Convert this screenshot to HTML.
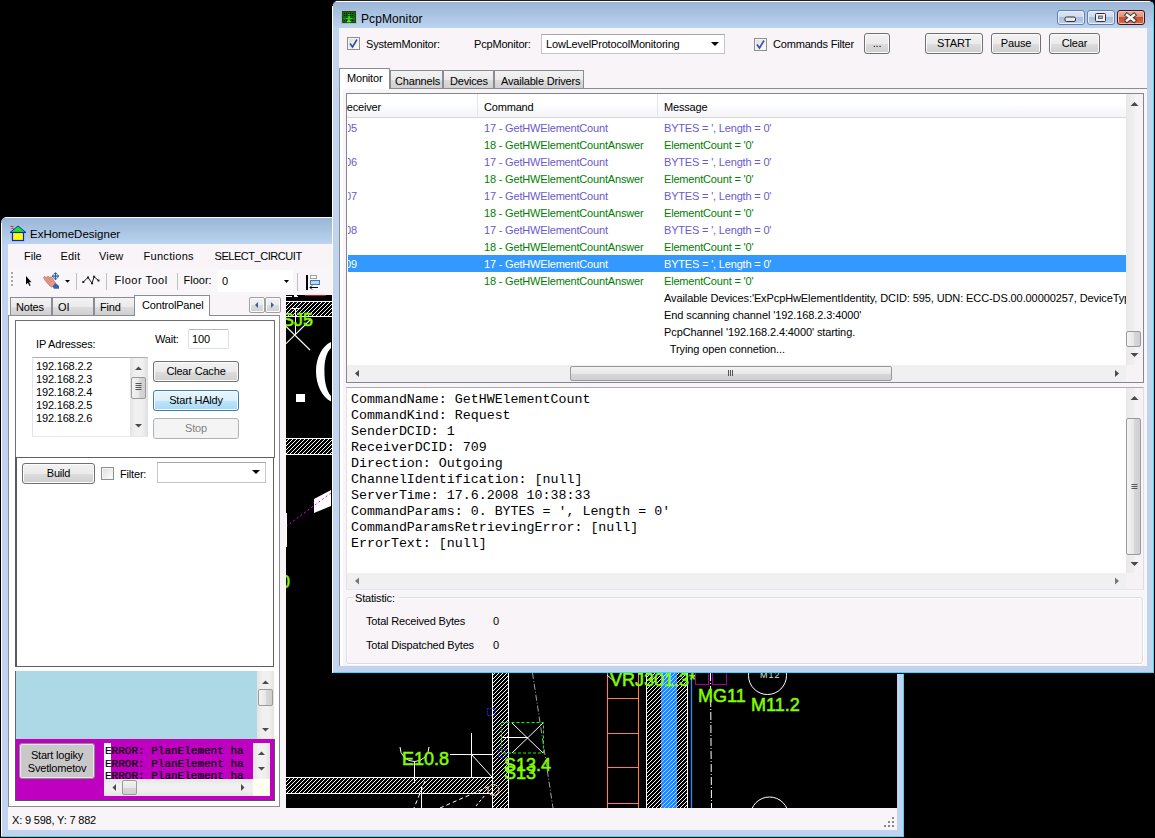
<!DOCTYPE html>
<html><head><meta charset="utf-8">
<style>
*{box-sizing:border-box;margin:0;padding:0}
html,body{width:1155px;height:838px;overflow:hidden;background:#000}
body{position:relative;font-family:"Liberation Sans",sans-serif;font-size:11px;color:#000}
.a{position:absolute}
.t{position:absolute;white-space:pre;font-size:11px;letter-spacing:-0.18px;line-height:13px}
.mono{font-family:"Liberation Mono",monospace}
.btn{position:absolute;border:1px solid #707070;border-radius:3px;background:linear-gradient(#f2f2f2 0%,#ebebeb 50%,#dddddd 51%,#cfcfcf 100%);box-shadow:inset 0 0 0 1px #fcfcfc;text-align:center;font-size:11px;letter-spacing:-0.18px;white-space:pre}
.chk{position:absolute;width:13px;height:13px;border:1px solid #8e8f8f;background:linear-gradient(135deg,#dcdcdc,#fff);box-shadow:inset 0 0 0 1px #f4f4f4}
.frame{position:absolute;background:#c2d5ee}
.client{position:absolute;background:#f8f4f8}
.tab{position:absolute;border:1px solid #898c95;border-bottom:none;background:linear-gradient(#f2f2f2 0%,#ebebeb 50%,#dddddd 51%,#cfcfcf 100%);font-size:11px;letter-spacing:-0.18px;white-space:pre}
.tabsel{position:absolute;border:1px solid #898c95;border-bottom:none;background:#fff;font-size:11px;letter-spacing:-0.18px;white-space:pre}
.sb{position:absolute;background:linear-gradient(90deg,#e3e3e3,#f0f0f0 30%,#f0f0f0 70%,#e3e3e3)}
.sbh{position:absolute;background:linear-gradient(#e3e3e3,#f0f0f0 30%,#f0f0f0 70%,#e3e3e3)}
.thumbv{position:absolute;border:1px solid #9a9a9a;border-radius:2px;background:linear-gradient(90deg,#f3f3f3,#e8e8e8 50%,#d8d8d8 51%,#cfcfcf)}
.thumbh{position:absolute;border:1px solid #9a9a9a;border-radius:2px;background:linear-gradient(#f3f3f3,#e8e8e8 50%,#d8d8d8 51%,#cfcfcf)}
.cad{fill:none;stroke:#fff;stroke-width:1}
.g{fill:#80ff00;stroke:#80ff00;stroke-width:0.5px;font-family:"Liberation Sans",sans-serif;font-size:18px}
</style></head><body>

<!-- ============ ExHomeDesigner window ============ -->
<div class="a" style="left:1px;top:217px;width:903px;height:620px;background:#c0d4ef;border-radius:6px 0 0 0;border-right:1px solid #40d4ff;border-bottom:1px solid #40d4ff"></div>
<div class="a" style="left:1px;top:217px;width:902px;height:27px;border-radius:6px 0 0 0;background:linear-gradient(#fff 0px,#fff 1px,#9ab5d6 1px,#bad3ef 27px)"></div>
<div class="t" style="left:30px;top:228px;font-size:11.5px;letter-spacing:0">ExHomeDesigner</div>
<svg class="a" style="left:9px;top:224px" width="18" height="19"><path d="M1.5 2.5h3M2.5 4.5h2" stroke="#e02020"/><path d="M1 8.5 L9 2 L17 8.5Z" fill="#22e022" stroke="#1020e0" stroke-width="1"/><rect x="3.5" y="8.5" width="11" height="8" fill="#ffff00" stroke="#1020e0" stroke-width="1.2"/></svg>

<!-- client -->
<div class="a" style="left:1px;top:223px;width:1px;height:613px;background:#fff"></div>
<div class="client" style="left:8px;top:244px;width:889px;height:586px"></div>

<!-- menu -->
<div class="t" style="left:24px;top:249.5px;letter-spacing:0px">File</div>
<div class="t" style="left:60.5px;top:249.5px;letter-spacing:0.2px">Edit</div>
<div class="t" style="left:99px;top:249.5px;letter-spacing:0.2px">View</div>
<div class="t" style="left:143.5px;top:249.5px;letter-spacing:0.3px">Functions</div>
<div class="t" style="left:214.5px;top:249.5px;letter-spacing:-0.45px">SELECT_CIRCUIT</div>

<!-- toolbar -->
<div class="a" style="left:8px;top:268px;width:324px;height:27px;background:#f8f6f9"></div>
<div class="t" style="left:114.5px;top:274px;letter-spacing:0.5px">Floor Tool</div>

<div class="t" style="left:183.5px;top:274px;letter-spacing:0px">Floor:</div>
<div class="a" style="left:218px;top:270px;width:75px;height:22px;background:#fff"></div>
<div class="t" style="left:222px;top:275px">0</div>
<svg class="a" style="left:8px;top:268px" width="324" height="27">
<path d="M3 4h2v2h-2zM3 8h2v2h-2zM3 12h2v2h-2zM3 16h2v2h-2z" fill="#a8a8a8"/>
<path d="M18 8 L18 16.5 L19.8 14.8 L21.5 18 L22.6 17.4 L21 14.2 L23.5 14.2Z" fill="#000"/>
<path d="M36 10.5 C35 9,36.5 8,37.5 9 L39 10.5 C38.5 8.5,40 7.5,41 9 L42 10.2 C42 8.5,43.5 8.3,44 9.5 L46 13 L47.5 15 L46 18 L43.5 19 C41 17.5,38 14,36 10.5Z" fill="#e49a88" stroke="#b86c5c" stroke-width="0.7"/>
<path d="M38 11.5 L42 15M40 10.5 L44 14" stroke="#c07868" stroke-width="0.6"/>
<path d="M44.5 18.5 L47.5 15 L51 18 L51 20.8 L46 20.8Z" fill="#3a64a8"/>
<path d="M47.5 5v6.5M44.2 8.2h6.8" stroke="#2a5aa8" stroke-width="1.2"/><path d="M46 6.2 L47.5 4.6 L49 6.2M46 10.2 L47.5 11.8 L49 10.2M45.8 6.7 L44.2 8.2 L45.8 9.7M49.2 6.7 L50.8 8.2 L49.2 9.7" fill="none" stroke="#2a5aa8" stroke-width="1"/>
<path d="M57 12h5 L59.5 14.8Z" fill="#000"/>
<path d="M68.5 5v17" stroke="#c0c0c0"/>
<path d="M75.3 13.9 L80 9.5 L84 15.2 L86.1 8.7 L90.5 12.6" fill="none" stroke="#202020" stroke-width="1"/>
<path d="M74.3 12.9h2v2h-2zM79 8.5h2v2h-2zM83 14.2h2v2h-2zM85.1 7.7h2v2h-2zM89.5 11.6h2v2h-2z" fill="#202020"/>
<path d="M98.5 5v17" stroke="#c0c0c0"/>
<path d="M169.5 5v17" stroke="#c0c0c0"/>
<path d="M276 12h5 L278.5 15Z" fill="#000"/>
<path d="M289.5 5v18" stroke="#c0c0c0"/>
<path d="M299 7v15" stroke="#000" stroke-width="2"/>
<rect x="302.5" y="7.5" width="6" height="3" fill="#fff" stroke="#a0a0a0"/>
<rect x="302.5" y="12.5" width="9" height="4" fill="#c0d8f0" stroke="#3a78c0"/>
<path d="M302 19.5h8M302 19.5 L304 17.5M302 19.5 L304 21.5" fill="none" stroke="#000"/>
</svg>

<!-- left panel -->
<div class="tab" style="left:10px;top:297px;width:42px;height:18px;padding:3px 0 0 5px">Notes</div>
<div class="tab" style="left:52px;top:297px;width:42px;height:18px;padding:3px 0 0 5px">OI</div>
<div class="tab" style="left:94px;top:297px;width:41px;height:18px;padding:3px 0 0 5px">Find</div>
<div class="a" style="left:8px;top:315px;width:272px;height:492px;background:#fff;border:1px solid #898c95"></div>
<div class="tabsel" style="left:134px;top:295px;width:76px;height:21px;padding:3px 0 0 7px">ControlPanel</div>
<!-- tab scroll arrows -->
<div class="btn" style="left:249px;top:297px;width:16px;height:16px;border-color:#a0a0a0;border-radius:2px"></div>
<div class="btn" style="left:265px;top:297px;width:16px;height:16px;border-color:#a0a0a0;border-radius:2px"></div>
<svg class="a" style="left:249px;top:297px" width="32" height="16"><path d="M9 5 L6 8 L9 11Z" fill="#3a5f9a"/><path d="M22 5 L25 8 L22 11Z" fill="#3a5f9a"/></svg>

<!-- group 1 -->
<div class="a" style="left:15px;top:320px;width:260px;height:138px;border:1px solid #6f6f6f"></div>
<div class="t" style="left:36px;top:338px">IP Adresses:</div>
<div class="t" style="left:155px;top:333px">Wait:</div>
<div class="a" style="left:188px;top:329px;width:41px;height:20px;border:1px solid #dcdfe4;border-top-color:#b5b8be;border-radius:2px;background:#fff"></div>
<div class="t" style="left:192px;top:333px">100</div>
<!-- listbox -->
<div class="a" style="left:32px;top:357px;width:116px;height:80px;border:1px solid #9f9f9f;border-color:#abadb3 #dbdfe6 #e3e9ef #e2e3ea;background:#fff"></div>
<div class="t" style="left:36px;top:360px;line-height:13px">192.168.2.2
192.168.2.3
192.168.2.4
192.168.2.5
192.168.2.6</div>
<div class="sb" style="left:130px;top:358px;width:17px;height:78px"></div>
<div class="thumbv" style="left:131px;top:377px;width:15px;height:22px"></div>
<svg class="a" style="left:130px;top:358px" width="17" height="78"><path d="M5 12 L8.5 8.5 L12 12Z" fill="#4a4a4a"/><path d="M5 66 L8.5 69.5 L12 66Z" fill="#4a4a4a"/><path d="M5.5 25.5h6M5.5 27.5h6M5.5 29.5h6M5.5 31.5h6" stroke="#555" stroke-width="1"/></svg>
<div class="btn" style="left:153px;top:361px;width:86px;height:21px;line-height:19px">Clear Cache</div>
<div class="btn" style="left:153px;top:390px;width:86px;height:21px;line-height:19px;border-color:#3c7fb1;background:linear-gradient(#eaf6fd 0%,#d9f0fc 50%,#bee6fd 51%,#a7d9f5 100%)">Start HAldy</div>
<div class="btn" style="left:153px;top:418px;width:86px;height:21px;line-height:19px;border-color:#adb2b5;background:#f4f4f4;color:#838383;box-shadow:none">Stop</div>

<!-- group 2 -->
<div class="a" style="left:15px;top:457px;width:259px;height:210px;border:1px solid #5f5f5f;border-left:2px solid #5a5a5a"></div>
<div class="btn" style="left:22px;top:463px;width:73px;height:21px;line-height:19px">Build</div>
<div class="chk" style="left:101px;top:467px"></div>
<div class="t" style="left:120px;top:468px">Filter:</div>
<div class="a" style="left:157px;top:462px;width:109px;height:21px;border:1px solid #c5c5c5;border-top-color:#a6a6a6;background:#fff"></div>
<svg class="a" style="left:250px;top:468px" width="12" height="8"><path d="M2 2 L10 2 L6 6Z" fill="#000"/></svg>

<!-- light blue area -->
<div class="a" style="left:15px;top:671px;width:242px;height:68px;background:#add8e6;border-left:1px solid #666"></div>
<div class="sb" style="left:257px;top:671px;width:17px;height:68px"></div>
<div class="thumbv" style="left:258px;top:689px;width:15px;height:17px"></div>
<svg class="a" style="left:257px;top:671px" width="17" height="68"><path d="M5 13 L8.5 9.5 L12 13Z" fill="#4a4a4a"/><path d="M5 57 L8.5 60.5 L12 57Z" fill="#4a4a4a"/></svg>

<!-- magenta area -->
<div class="a" style="left:15px;top:739px;width:260px;height:62px;background:#c000c0;border:1px solid #555;border-top:none"></div>
<div class="btn" style="left:19px;top:743px;width:76px;height:36px;line-height:13px;padding-top:5px;background:#c8c8c8;border-color:#8a8a8a;box-shadow:inset 0 0 0 1px #e8e8e8">Start logiky
Svetlometov</div>
<div class="a" style="left:104px;top:743px;width:149px;height:36px;background:#c000c0;overflow:hidden">
<div class="a" style="left:0;top:0;width:7px;height:36px;background:#fff"></div>
<div class="t mono" style="left:1px;top:2px;font-size:11px;line-height:12.5px;letter-spacing:0;-webkit-text-stroke:0.2px #000;color:#000">ERROR: PlanElement ha
ERROR: PlanElement ha
ERROR: PlanElement ha</div>
</div>
<div class="sb" style="left:253px;top:743px;width:17px;height:36px"></div>
<svg class="a" style="left:253px;top:743px" width="17" height="36"><path d="M5 12 L8.5 8.5 L12 12Z" fill="#4a4a4a"/><path d="M5 24 L8.5 27.5 L12 24Z" fill="#4a4a4a"/></svg>
<div class="sbh" style="left:104px;top:779px;width:149px;height:17px"></div>
<div class="thumbh" style="left:122px;top:780px;width:15px;height:15px"></div>
<svg class="a" style="left:104px;top:779px" width="149" height="17"><path d="M12 5 L8.5 8.5 L12 12Z" fill="#4a4a4a"/><path d="M137 5 L140.5 8.5 L137 12Z" fill="#4a4a4a"/></svg>
<div class="a" style="left:253px;top:779px;width:17px;height:17px;background:#fffff0"></div>

<!-- CAD -->
<svg class="a" style="left:286px;top:295px" width="611" height="513" viewBox="286 295 611 513">
<defs>
<pattern id="h1" patternUnits="userSpaceOnUse" width="4" height="4"><path d="M-1 1 L1 -1 M0 4 L4 0 M3 5 L5 3" stroke="#fff" stroke-width="1"/></pattern>
<pattern id="h2" patternUnits="userSpaceOnUse" width="4" height="4"><path d="M-1 1 L1 -1 M0 4 L4 0 M3 5 L5 3" stroke="#b0d8ff" stroke-width="1"/></pattern>
</defs>
<rect x="286" y="295" width="611" height="513" fill="#000"/>
<!-- top strip -->
<path d="M305 295.5h21" stroke="#ff0000" stroke-width="1"/>
<path d="M286 296.5h6M294 296.5h4M294 295.5h3" stroke="#fff"/>
<rect x="286" y="302" width="46" height="14" fill="url(#h1)"/>
<path d="M286 301.5h46M286 316.5h46" stroke="#fff"/>
<path d="M290.5 308.5h10M295.5 308.5v26" stroke="#fff"/>
<path d="M286 326.5 L310 350M286 343.7 L310 320" stroke="#fff" stroke-width="1.1"/>
<text x="282" y="326" class="g">SJ5</text>
<path d="M331 342 C322 346,316 358,316 371 C316 385,322 397,331 401.6 L331 396 C326.5 391,324.4 382,324.4 371 C324.4 360,326.5 352,331 348Z" fill="#fff"/>
<rect x="296" y="394" width="9" height="8" fill="#fff"/>
<rect x="286" y="439" width="46" height="15" fill="url(#h1)"/>
<path d="M286 438.5h46M286 454.5h46" stroke="#fff"/>
<path d="M314 499 L331 490 L331 506 L314 513Z" fill="#fff"/>
<path d="M286 526.5 L331 493" stroke="#ff00ff" stroke-dasharray="2 2.5" stroke-width="1"/>
<rect x="286" y="513" width="1" height="34" fill="#fff"/>
<text x="280" y="587.5" class="g">0</text>

<!-- bottom region -->
<rect x="286" y="778" width="206" height="15" fill="url(#h1)"/>
<path d="M286 777.5h206M286 793.5h206" stroke="#fff"/>
<path d="M400 747 A14.5 14.5 0 0 0 429 747" fill="none" stroke="#fff"/>
<path d="M414.5 761v22M450 754.5h42M471.5 733v44M472 755 L492 777M421.5 786v22" stroke="#fff"/>
<path d="M425 781 L414 808M440 808 L490 786" stroke="#fff" stroke-dasharray="4 3"/>
<text x="402" y="764.5" class="g">E10.8</text>
<!-- vertical wall -->
<rect x="493" y="673" width="15" height="135" fill="url(#h1)"/>
<path d="M492.5 673v135M508.5 673v135" stroke="#fff"/>
<rect x="487.5" y="708.5" width="7.5" height="7" fill="none" stroke="#2020ff" stroke-dasharray="1.5 1"/>
<rect x="498.5" y="749.5" width="7.5" height="8" fill="none" stroke="#2020ff" stroke-dasharray="1.5 1"/>
<circle cx="493.5" cy="790" r="5.5" fill="none" stroke="#f0c080"/>
<path d="M532.5 673 L553 808" stroke="#a0a0a0" stroke-dasharray="6 2 1 2"/>
<path d="M512 723 L543 753M543 723 L512 753M502 737.5h26" stroke="#fff"/>
<rect x="501.5" y="722.5" width="42" height="30.5" fill="none" stroke="#00ff00" stroke-dasharray="3 2"/>
<text x="504" y="771" class="g">S13.4</text>
<text x="504" y="778.5" class="g">S13</text>
<!-- ladder -->
<path d="M607.5 673v135M638.5 673v135M607 698.5h32M607 733.5h32M607 767.5h32M607 803.5h32" stroke="#ff8040" stroke-width="1.1"/>
<rect x="647" y="673" width="41" height="135" fill="url(#h1)"/>
<rect x="661" y="673" width="16" height="135" fill="#1a88ff"/>
<rect x="661" y="673" width="16" height="135" fill="url(#h2)"/>
<path d="M646.5 673v135M687.5 673v135" stroke="#fff"/>
<path d="M691.5 673v135" stroke="#1e90ff" stroke-width="1.3"/>
<path d="M607 675 L615 682" stroke="#fff"/>
<text x="610" y="686" class="g">VRJ301.3*</text>
<rect x="695.5" y="672" width="13" height="12.5" fill="none" stroke="#a000a0"/>
<rect x="712.5" y="672" width="14" height="12.5" fill="none" stroke="#a000a0"/>
<path d="M710.5 673 L711.5 808" stroke="#fff" stroke-dasharray="8 2 1 2"/>
<text x="698" y="702" class="g">MG11</text>
<text x="751" y="711" class="g">M11.2</text>
<circle cx="767.5" cy="675.5" r="19" fill="none" stroke="#fff"/>
<text x="760" y="677.5" fill="#fff" style="font-family:'Liberation Sans';font-size:9px;letter-spacing:1px" opacity="0.85">M12</text>
<path d="M476 806 L485 795" stroke="#fff" stroke-dasharray="3 2"/>
<circle cx="769.5" cy="816" r="19" fill="none" stroke="#fff"/>
</svg>

<!-- status bar -->
<div class="t" style="left:12px;top:814px">X: 9 598, Y: 7 882</div>
<svg class="a" style="left:880px;top:812px" width="17" height="18"><path d="M12 5h2v2h-2zM8 9h2v2h-2zM12 9h2v2h-2zM4 13h2v2h-2zM8 13h2v2h-2zM12 13h2v2h-2z" fill="#8a8a8a"/></svg>

<!-- ============ PcpMonitor window ============ -->
<div class="a" style="left:332px;top:0px;width:822px;height:673px;background:#c0d4ef;border-radius:6px 6px 0 0;border:1px solid #1e1e1e;border-top-color:#1e1e1e;border-right:1px solid #40d4ff;border-bottom:1px solid #40d4ff"></div>
<div class="a" style="left:897px;top:673px;width:8px;height:1px;background:#000"></div>
<div class="a" style="left:333px;top:1px;width:820px;height:27px;border-radius:5px 5px 0 0;background:linear-gradient(#fff 0px,#fff 1px,#9ab5d6 1px,#bad3ef 27px)"></div>
<div class="t" style="left:361px;top:12.5px;font-size:12px;letter-spacing:0.1px">PcpMonitor</div>
<div class="a" style="left:332px;top:6px;width:1px;height:667px;background:#fff"></div>
<div class="client" style="left:339px;top:28px;width:808px;height:638px"></div>
<!-- icon -->
<svg class="a" style="left:341px;top:10px" width="16" height="14"><rect x="0.5" y="0.5" width="15" height="13" fill="#1a4a1a" stroke="#b8b8b8"/><rect x="2" y="2" width="12" height="10" fill="#116611"/><path d="M3 3h1v1h-1zM5 3h1v1h-1zM7 3h1v1h-1zM9 3h1v1h-1zM11 3h1v1h-1zM3 5h1v1h-1zM5 5h1v1h-1zM9 5h1v1h-1zM11 5h1v1h-1zM3 10h1v1h-1zM5 10h1v1h-1zM9 10h1v1h-1zM11 10h1v1h-1z" fill="#000"/><path d="M2 8.5h12" stroke="#1c8c1c"/><path d="M8 6v5.5M6 11.5h4" stroke="#44ff22" stroke-width="1.3"/><path d="M8 4v1M5.5 8.5h1M9.5 8.5h1" stroke="#44ff22"/></svg>
<!-- caption buttons -->
<div class="a" style="left:1057px;top:10px;width:28px;height:15px;border:1px solid #6a7fa8;border-radius:3px;background:linear-gradient(#dbe7f6 0%,#cddcf0 45%,#a9c0de 50%,#b9cfea 100%);box-shadow:inset 0 0 0 1px #e6eef9"></div>
<div class="a" style="left:1087px;top:10px;width:28px;height:15px;border:1px solid #6a7fa8;border-radius:3px;background:linear-gradient(#dbe7f6 0%,#cddcf0 45%,#a9c0de 50%,#b9cfea 100%);box-shadow:inset 0 0 0 1px #e6eef9"></div>
<div class="a" style="left:1117px;top:10px;width:28px;height:15px;border:1px solid #4a1010;border-radius:3px;background:linear-gradient(#eab0a0 0%,#e09080 45%,#c8502e 50%,#d56a4a 100%);box-shadow:inset 0 0 0 1px #f0c0b0"></div>
<svg class="a" style="left:1057px;top:10px" width="90" height="15">
<rect x="8" y="7" width="10.5" height="4.5" rx="1.5" fill="#e8e8e8" stroke="#333" stroke-width="1"/>
<rect x="38.5" y="3.5" width="10" height="8" rx="1" fill="#f0f0f0" stroke="#333" stroke-width="1"/><rect x="41.5" y="6" width="4" height="2.5" fill="#9cb4d4" stroke="#555" stroke-width="0.8"/>
<path d="M70 5 L77 10.5M77 5 L70 10.5" stroke="#333" stroke-width="4.4" stroke-linecap="square"/><path d="M70 5 L77 10.5M77 5 L70 10.5" stroke="#f4f4f4" stroke-width="2.6" stroke-linecap="square"/>
</svg>

<!-- top controls -->
<div class="chk" style="left:347px;top:37px"></div>
<svg class="a" style="left:347px;top:37px" width="13" height="13"><path d="M3 6.5 L5.5 10 L10 2.5" fill="none" stroke="#3050a8" stroke-width="1.6"/></svg>
<div class="t" style="left:366px;top:38px">SystemMonitor:</div>
<div class="t" style="left:474px;top:38px">PcpMonitor:</div>
<div class="a" style="left:541px;top:34px;width:184px;height:20px;border:1px solid #c5c5c5;border-top-color:#a6a6a6;background:#fff"></div>
<div class="t" style="left:546px;top:38px">LowLevelProtocolMonitoring</div>
<svg class="a" style="left:709px;top:40px" width="12" height="8"><path d="M2 2 L10 2 L6 6Z" fill="#000"/></svg>
<div class="chk" style="left:754px;top:38px"></div>
<svg class="a" style="left:754px;top:38px" width="13" height="13"><path d="M3 6.5 L5.5 10 L10 2.5" fill="none" stroke="#3050a8" stroke-width="1.6"/></svg>
<div class="t" style="left:773px;top:38px">Commands Filter</div>
<div class="btn" style="left:864px;top:33px;width:26px;height:21px;line-height:19px">...</div>
<div class="btn" style="left:925px;top:33px;width:58px;height:21px;line-height:19px">START</div>
<div class="btn" style="left:991px;top:33px;width:50px;height:21px;line-height:19px">Pause</div>
<div class="btn" style="left:1049px;top:33px;width:51px;height:21px;line-height:19px">Clear</div>

<!-- tabs -->
<div class="a" style="left:339px;top:88px;width:808px;height:1px;background:#898c95"></div>
<div class="a" style="left:339px;top:88px;width:1px;height:578px;background:#8a8d94"></div>
<div class="a" style="left:340px;top:89px;width:3px;height:577px;background:#fff"></div>
<div class="tab" style="left:390px;top:70px;width:53px;height:18px;padding:4px 0 0 4px">Channels</div>
<div class="tab" style="left:443px;top:70px;width:51px;height:18px;padding:4px 0 0 6px">Devices</div>
<div class="tab" style="left:494px;top:70px;width:90px;height:18px;padding:4px 0 0 6px">Available Drivers</div>
<div class="tabsel" style="left:339px;top:68px;width:51px;height:21px;padding:3px 0 0 7px;background:#fff">Monitor</div>

<!-- list view -->
<div class="a" style="left:346px;top:93px;width:798px;height:290px;border:1px solid #828790;background:#fff;overflow:hidden">
 <div class="a" style="left:0;top:0;width:779px;height:24px;background:linear-gradient(#fff 0%,#fff 40%,#fafbfc 60%,#f5f4f7 100%);border-bottom:1px solid #d8d8d8"></div>
 <div class="a" style="left:130px;top:0;width:1px;height:23px;background:#e3e5e8"></div>
 <div class="a" style="left:310px;top:0;width:1px;height:23px;background:#e3e5e8"></div>
 <div class="t" style="left:-8px;top:6.5px">Receiver</div>
 <div class="t" style="left:137px;top:6.5px">Command</div>
 <div class="t" style="left:317px;top:6.5px">Message</div>
 <div class="a" style="left:1px;top:161px;width:778px;height:17px;background:#3399ff"></div>
 <div class="a" style="left:1px;top:24.5px;width:128px;height:170px;overflow:hidden">
  <div class="t" style="left:-9px;top:1px;line-height:17px;color:#6a5acd">705

706

707

708

</div>
  <div class="t" style="left:-9px;top:137px;line-height:17px;color:#fff">709</div>
 </div>
 <div class="t" style="left:137px;top:25.5px;line-height:17px;color:#6a5acd">17 - GetHWElementCount

17 - GetHWElementCount

17 - GetHWElementCount

17 - GetHWElementCount</div>
 <div class="t" style="left:137px;top:42.5px;line-height:17px;color:#008000">18 - GetHWElementCountAnswer

18 - GetHWElementCountAnswer

18 - GetHWElementCountAnswer

18 - GetHWElementCountAnswer

18 - GetHWElementCountAnswer</div>
 <div class="t" style="left:137px;top:161.5px;line-height:17px;color:#fff">17 - GetHWElementCount</div>
 <div class="t" style="left:317px;top:25.5px;line-height:17px;color:#6a5acd">BYTES = ', Length = 0'

BYTES = ', Length = 0'

BYTES = ', Length = 0'

BYTES = ', Length = 0'</div>
 <div class="t" style="left:317px;top:42.5px;line-height:17px;color:#008000">ElementCount = '0'

ElementCount = '0'

ElementCount = '0'

ElementCount = '0'

ElementCount = '0'</div>
 <div class="t" style="left:317px;top:161.5px;line-height:17px;color:#fff">BYTES = ', Length = 0'</div>
 <div class="a" style="left:317px;top:195.5px;width:462px;height:70px;overflow:hidden">
 <div class="t" style="left:0;top:0;line-height:17px;color:#000;letter-spacing:-0.1px">Available Devices:'ExPcpHwElementIdentity, DCID: 595, UDN: ECC-DS.00.00000257, DeviceType
End scanning channel '192.168.2.3:4000'
PcpChannel '192.168.2.4:4000' starting.
  Trying open connetion...</div>
 </div>
 <!-- v scrollbar -->
 <div class="sb" style="left:779px;top:0;width:17px;height:271px;background:linear-gradient(90deg,#e8e8e8 0%,#f0f0f0 50%,#f6f2f6 51%,#f6f2f6 100%)"></div>
 <div class="thumbv" style="left:779px;top:237px;width:15px;height:16px"></div>
 <svg class="a" style="left:779px;top:0" width="17" height="271"><path d="M4.5 12 L8.5 8 L12.5 12Z" fill="#4a4a4a"/><path d="M4.5 259 L8.5 263 L12.5 259Z" fill="#4a4a4a"/></svg>
 <!-- h scrollbar -->
 <div class="sbh" style="left:0;top:271px;width:779px;height:17px;background:#f0f0f0"></div>
 <div class="thumbh" style="left:223px;top:272px;width:322px;height:15px"></div>
 <svg class="a" style="left:0;top:271px" width="796" height="17"><path d="M12 5 L8 8.5 L12 12Z" fill="#4a4a4a"/><path d="M768 5 L772 8.5 L768 12Z" fill="#4a4a4a"/><path d="M381.5 5v6M383.5 5v6M385.5 5v6" stroke="#555"/></svg>
 <div class="a" style="left:779px;top:271px;width:17px;height:17px;background:#f6f2f6"></div>
</div>

<!-- details textbox -->
<div class="a" style="left:346px;top:387px;width:798px;height:203px;border:1px solid #abadb3;border-color:#abadb3 #dbdfe6 #e3e9ef #e2e3ea;background:#fff;overflow:hidden">
 <div class="t mono" style="left:4px;top:3.5px;font-size:13.3px;line-height:16px;letter-spacing:0">CommandName: GetHWElementCount
CommandKind: Request
SenderDCID: 1
ReceiverDCID: 709
Direction: Outgoing
ChannelIdentification: [null]
ServerTime: 17.6.2008 10:38:33
CommandParams: 0. BYTES = ', Length = 0'
CommandParamsRetrievingError: [null]
ErrorText: [null]</div>
 <div class="sb" style="left:779px;top:0;width:17px;height:185px;background:linear-gradient(90deg,#e8e8e8 0%,#f0f0f0 50%,#f6f2f6 51%,#f6f2f6 100%)"></div>
 <div class="thumbv" style="left:779px;top:30px;width:15px;height:137px"></div>
 <svg class="a" style="left:779px;top:0" width="17" height="185"><path d="M4.5 12 L8.5 8 L12.5 12Z" fill="#4a4a4a"/><path d="M4.5 174 L8.5 178 L12.5 174Z" fill="#4a4a4a"/><path d="M5.5 96.5h6M5.5 98.5h6M5.5 100.5h6" stroke="#555"/></svg>
 <div class="sbh" style="left:0;top:185px;width:779px;height:16px;background:#f0f0f0"></div>
 <svg class="a" style="left:0;top:185px" width="796" height="17"><path d="M12 4.5 L8 8 L12 11.5Z" fill="#777"/><path d="M768 4.5 L772 8 L768 11.5Z" fill="#777"/></svg>
 <div class="a" style="left:779px;top:185px;width:17px;height:16px;background:#f5f1f5"></div>
</div>

<!-- statistic group -->
<div class="a" style="left:346px;top:597px;width:797px;height:67px;border:1px solid #d5dfe5;border-radius:3px;box-shadow:1px 1px 0 #fff, inset 1px 1px 0 #fff"></div>
<div class="a" style="left:353px;top:592px;width:45px;height:12px;background:#f8f4f8"></div>
<div class="t" style="left:355px;top:592px">Statistic:</div>
<div class="t" style="left:366px;top:615px">Total Received Bytes</div>
<div class="t" style="left:493px;top:615px">0</div>
<div class="t" style="left:366px;top:639px">Total Dispatched Bytes</div>
<div class="t" style="left:493px;top:639px">0</div>

</body></html>
